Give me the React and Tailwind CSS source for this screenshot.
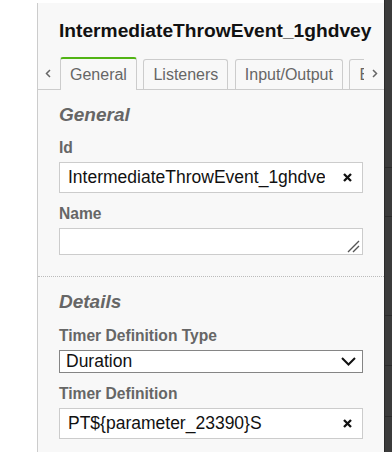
/**
 * Properties panel for a BPMN intermediate throw event.
 */

const font = { fontFamily: '"Liberation Sans", Arial, sans-serif' };

function ClearIcon() {
  return (
    <svg width="9" height="9" viewBox="0 0 9 9" aria-hidden="true">
      <path d="M1 1 L8 8 M8 1 L1 8" stroke="#111" strokeWidth="2.3" strokeLinecap="butt" />
    </svg>
  );
}

function TextInput({ value }) {
  return (
    <div className="flex h-[31px] items-center border border-[#ccc] bg-white">
      <span className="min-w-0 flex-1 overflow-hidden whitespace-nowrap pl-[8px] text-[17.5px] text-[#111]">
        {value}
      </span>
      <span className="flex w-[37px] shrink-0 items-center justify-center pl-[8px]">
        <ClearIcon />
      </span>
    </div>
  );
}

function Label({ children }) {
  return (
    <div className="h-[18px] text-[15.6px] font-bold leading-[18px] text-[#666]">
      {children}
    </div>
  );
}

function SectionTitle({ children }) {
  return (
    <div className="h-[22px] text-[19px] font-bold italic leading-[22px] text-[#666]">
      {children}
    </div>
  );
}

function Tab({ label, active }) {
  if (active) {
    return (
      <div className="flex h-[33px] shrink-0 items-center rounded-t-[3px] border-x border-t-2 border-[#ccc] border-t-[#52b415] bg-[#f8f8f8] px-[9px] text-[16px] text-[#666]">
        {label}
      </div>
    );
  }
  return (
    <div className="mb-[1px] flex h-[30px] shrink-0 items-center rounded-t-[3px] border-x border-t border-[#ccc] bg-[#f8f8f8] px-[9px] text-[16px] text-[#666]">
      {label}
    </div>
  );
}

function App() {
  return (
    <div className="flex h-[452px] w-[392px] overflow-hidden bg-white" style={font}>
      <div className="w-[37px] shrink-0" />

      {/* Panel */}
      <div className="mt-[3px] flex min-w-0 flex-1 flex-col border-l border-[#ccc] bg-[#f8f8f8]">
        <div className="h-[22px] mt-[17px] pl-[21px] text-[19.2px] font-bold leading-[22px] text-[#111] whitespace-nowrap">
          IntermediateThrowEvent_1ghdvey
        </div>

        {/* Tabs */}
        <div className="mt-[15px] flex h-[33px] border-b border-[#ccc]">
          <div className="flex w-[22px] shrink-0 items-center justify-center pr-[3px]">
            <svg width="6" height="9" viewBox="0 0 6 9" aria-hidden="true">
              <path d="M5 1 L1.5 4.5 L5 8" fill="none" stroke="#666" strokeWidth="1.5" />
            </svg>
          </div>
          <div className="flex h-[33px] min-w-0 flex-1 items-end gap-[6.5px] overflow-hidden">
            <Tab label="General" active />
            <Tab label="Listeners" />
            <Tab label="Input/Output" />
            <Tab label="Extensions" />
          </div>
          <div className="flex w-[20px] shrink-0 items-center justify-center bg-[#f8f8f8] pl-[2px]">
            <svg width="6" height="9" viewBox="0 0 6 9" aria-hidden="true">
              <path d="M1 1 L4.5 4.5 L1 8" fill="none" stroke="#666" strokeWidth="1.5" />
            </svg>
          </div>
        </div>

        {/* General group */}
        <div className="px-[21px]">
          <div className="mt-[14px]">
            <SectionTitle>General</SectionTitle>
          </div>
          <div className="mt-[13px]">
            <Label>Id</Label>
          </div>
          <div className="mt-[5px]">
            <TextInput value="IntermediateThrowEvent_1ghdvey" />
          </div>
          <div className="mt-[12px]">
            <Label>Name</Label>
          </div>
          <div className="mt-[5px] flex h-[27px] items-end justify-end border border-[#ccc] bg-white pb-[1px] pr-[2px]">
            <svg width="13" height="13" viewBox="0 0 13 13" aria-hidden="true">
              <path d="M1 12 L12 1 M6 12 L12 6" stroke="#555" strokeWidth="1.4" />
            </svg>
          </div>
        </div>

        <div className="mt-[21px] border-t border-dotted border-[#bbb]" />

        {/* Details group */}
        <div className="px-[21px]">
          <div className="mt-[14px]">
            <SectionTitle>Details</SectionTitle>
          </div>
          <div className="mt-[14px]">
            <Label>Timer Definition Type</Label>
          </div>
          <div className="mt-[5px] flex h-[23px] items-center justify-between border border-[#858585] bg-white pl-[6px] pr-[6px]">
            <span className="text-[17.5px] text-[#111]">Duration</span>
            <svg width="15" height="9" viewBox="0 0 15 9" aria-hidden="true">
              <path d="M1 1 L7.5 7.5 L14 1" fill="none" stroke="#111" strokeWidth="2" />
            </svg>
          </div>
          <div className="mt-[12px]">
            <Label>Timer Definition</Label>
          </div>
          <div className="mt-[5px]">
            <TextInput value="PT${parameter_23390}S" />
          </div>
        </div>
      </div>

      {/* Canvas edge */}
      <div className="flex w-[8px] shrink-0 flex-col border-l border-[#2a2a2a] bg-[#3b3b3b]">
        <div className="h-[168px] border-b border-[#2c2c2c]" />
        <div className="h-[49px] border-b border-[#2c2c2c]" />
        <div className="h-[99px] border-b border-[#2c2c2c]" />
        <div className="h-[50px] border-b border-[#2c2c2c]" />
        <div className="h-[51px] border-b border-[#2c2c2c]" />
        <div className="flex-1" />
      </div>
    </div>
  );
}

export default App;
